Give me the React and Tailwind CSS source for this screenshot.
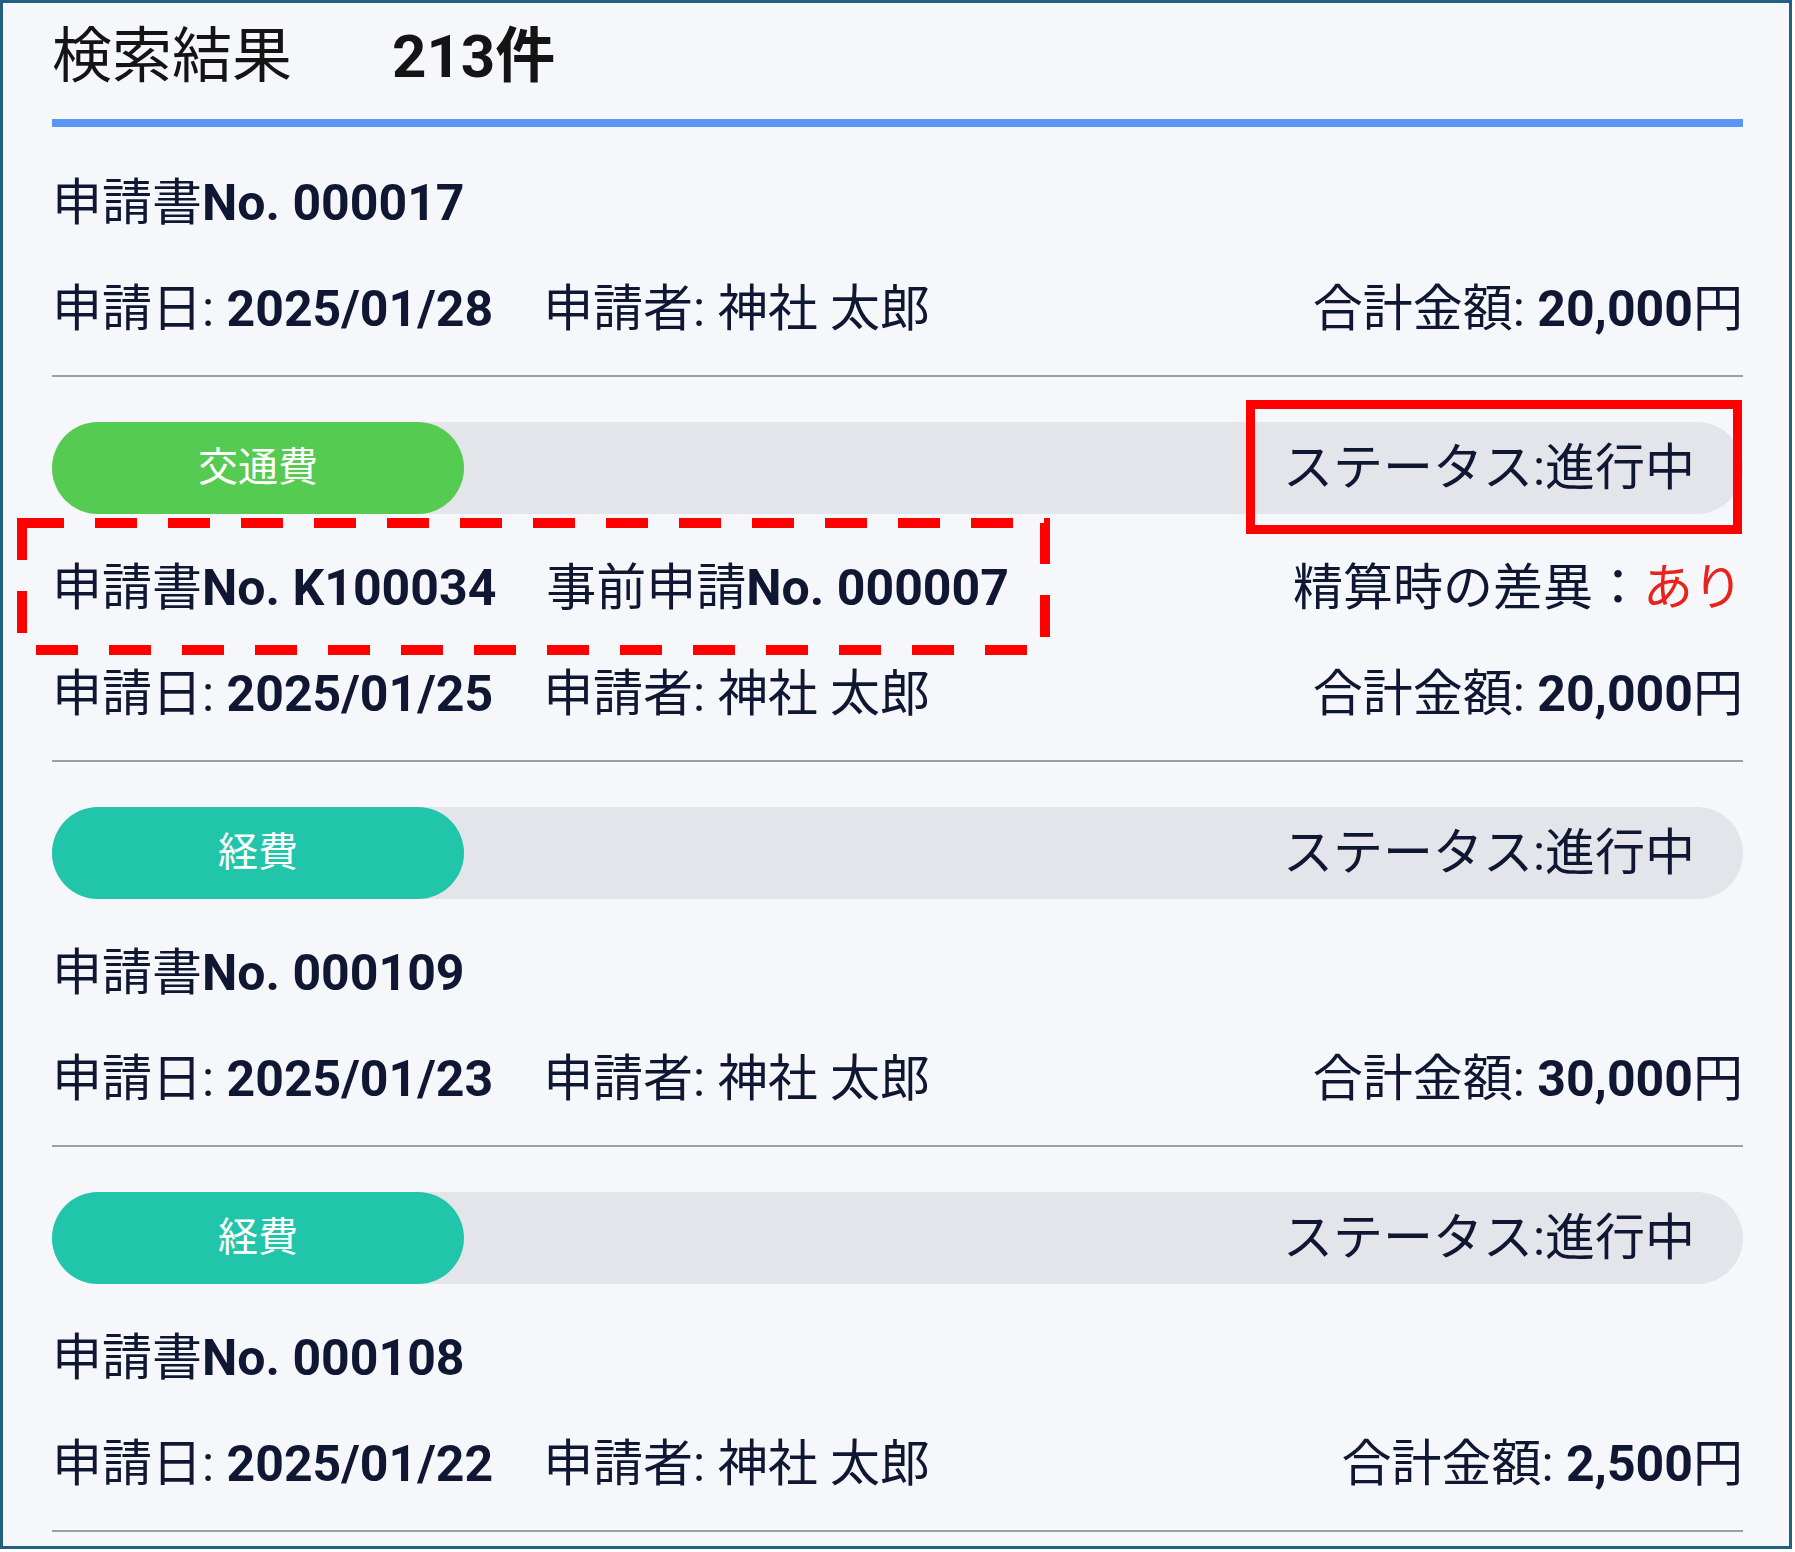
import React from 'react';

const items = [
  { id: '000017', date: '2025/01/28', name: '神社 太郎', amount: '20,000' },
  { id: 'K100034', pre: '000007', diff: true, date: '2025/01/25', name: '神社 太郎', amount: '20,000', tag: '交通費', tagColor: 'bg-[#55cb52]' },
  { id: '000109', date: '2025/01/23', name: '神社 太郎', amount: '30,000', tag: '経費', tagColor: 'bg-[#21c6aa]' },
  { id: '000108', date: '2025/01/22', name: '神社 太郎', amount: '2,500', tag: '経費', tagColor: 'bg-[#21c6aa]' },
];

const Row = ({ children }) => (
  <div className="flex h-[60px] items-center justify-between whitespace-nowrap">{children}</div>
);

const Item = ({ item, first }) => (
  <div className={`border-b-2 border-[#9b9fa8] pb-[36px] ${first ? 'pt-[46px]' : 'pt-[45px]'}`}>
    {item.tag && (
      <div className="mb-[44px] flex h-[92px] items-center justify-between rounded-full bg-[#e4e5ea]">
        <div className={`flex h-full w-[412px] items-center justify-center rounded-full text-[40px] text-white ${item.tagColor}`}>
          {item.tag}
        </div>
        <div className="pr-[48px] text-[50px]">ステータス:進行中</div>
      </div>
    )}
    <div className="flex flex-col gap-[46px]">
      <Row>
        <div>
          申請書<span className="font-bold">No. {item.id}</span>
          {item.pre && (
            <span className="ml-[50px]">
              事前申請<span className="font-bold">No. {item.pre}</span>
            </span>
          )}
        </div>
        {item.diff && (
          <div>
            精算時の差異：<span className="text-[#e8231c]">あり</span>
          </div>
        )}
      </Row>
      <Row>
        <div>
          申請日: <span className="font-bold">{item.date}</span>
          <span className="ml-[50px]">申請者: {item.name}</span>
        </div>
        <div>
          合計金額: <span className="font-bold">{item.amount}</span>円
        </div>
      </Row>
    </div>
  </div>
);

export default function App() {
  return (
    <div className="h-[1552px] w-[1795px] bg-white font-[Roboto,'Noto_Sans_CJK_JP',sans-serif]">
      <div className="relative h-[1549px] w-[1792px] border-[3px] border-[#245f80] bg-[#f6f7fb] pl-[49px] pr-[46px] pt-[19px] text-[50px] text-[#101733]">
        <div className="flex h-[70px] items-center text-[60px] text-[#141414]">
          <span>検索結果</span>
          <span className="ml-[100px] font-bold">213件</span>
        </div>
        <div className="mt-[27px] h-[8px] bg-[#5b97f2]" />

        {items.map((item, i) => (
          <Item key={item.id} item={item} first={i === 0} />
        ))}

        {/* annotation: status box */}
        <div className="absolute left-[1243px] top-[397px] h-[134px] w-[496px] border-[9px] border-[#ff0000]" />

        {/* annotation: dashed box */}
        <svg className="absolute left-[14px] top-[515px]" width="1033" height="137">
          <rect x="5" y="5" width="1023" height="127" fill="none" stroke="#ff0000" strokeWidth="10" strokeDasharray="42 31" />
        </svg>
      </div>
    </div>
  );
}
